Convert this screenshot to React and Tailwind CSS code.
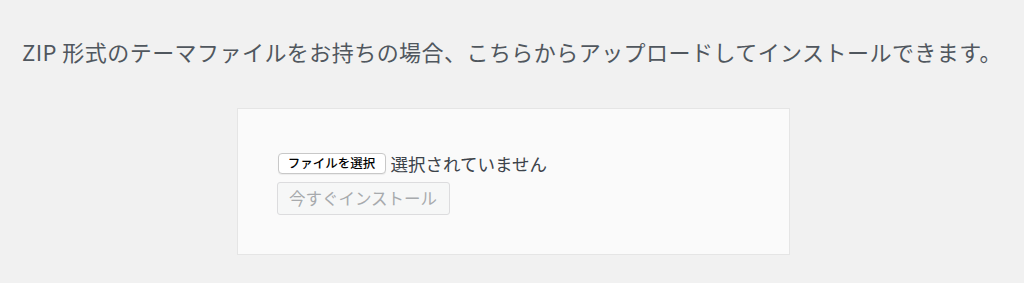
export default function App() {
  const jp = { fontFamily: '"Noto Sans CJK JP", "Noto Sans", sans-serif' };
  return (
    <div className="w-[1024px] h-[283px] bg-[#f1f1f1] overflow-hidden" style={jp}>
      <p className="pt-[36px] text-center text-[22px] tracking-[0.45px] leading-[30px] text-[#50575e] whitespace-nowrap">
        ZIP 形式のテーマファイルをお持ちの場合、こちらからアップロードしてインストールできます。
      </p>
      <div className="flex justify-center mt-[42px]">
        <div className="ml-[2px] w-[553px] h-[147px] bg-[#fafafa] border border-[#e5e5e5] pt-[44px] pl-[39px]">
          <div className="flex items-center gap-[5px]">
            <button className="ml-[1px] h-[21px] w-[108px] bg-white border border-[#c8c8c8] rounded-[4px] text-[12.5px] font-medium text-black leading-none flex items-center justify-center shadow-[0_1px_1px_rgba(0,0,0,0.06)]">
              ファイルを選択
            </button>
            <span className="text-[17.5px] text-[#3c434a] leading-none">選択されていません</span>
          </div>
          <button className="mt-[8px] h-[33px] w-[173px] bg-[#f6f7f7] border border-[#dcdcde] rounded-[3px] text-[16.5px] text-[#a7aaad] leading-none flex items-center justify-center">
            今すぐインストール
          </button>
        </div>
      </div>
    </div>
  );
}
